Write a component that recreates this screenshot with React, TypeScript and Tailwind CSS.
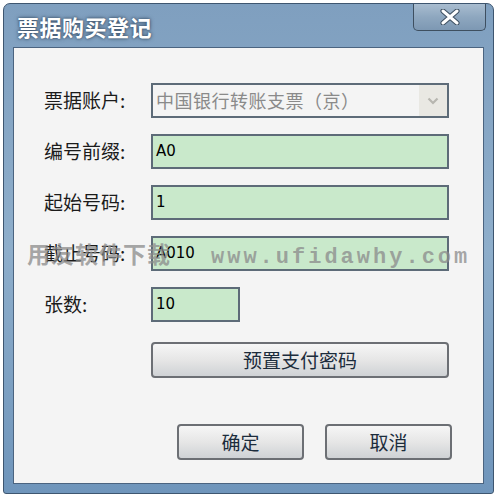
const cjk = { fontFamily: '"Noto Sans CJK SC", "Noto Sans", sans-serif' };
const latin = { fontFamily: '"DejaVu Sans", "Noto Sans CJK SC", sans-serif' };

function Field({ label, value, width = "w-[298px]" }: { label: string; value: string; width?: string }) {
  return (
    <div className="flex items-center h-[35px]">
      <div className="w-[107px] text-[19px] text-[#1b1b1b]" style={cjk}>
        {label}
      </div>
      <div
        className={`${width} h-[35px] border-2 border-[#5d6b78] bg-[#c9e9cb] flex items-center px-[3px] text-[15px] text-black`}
        style={latin}
      >
        {value}
      </div>
    </div>
  );
}

function Btn({ children, className = "" }: { children: React.ReactNode; className?: string }) {
  return (
    <button
      className={`h-[36px] rounded-[4px] border-2 border-[#6c6f74] bg-gradient-to-b from-[#f6f6f6] via-[#e6e6e6] to-[#cfd2d5] text-[19px] text-[#1c2c3c] flex items-center justify-center ${className}`}
      style={cjk}
    >
      {children}
    </button>
  );
}

export default function App() {
  return (
    <div className="w-[497px] h-[500px] bg-white pt-[3px] pl-[3px]">
      <div className="w-[491px] h-[491px] rounded-t-[7px] rounded-b-[3px] border border-[#3e5670] bg-gradient-to-b from-[#7f9fbf] via-[#8eaecb] to-[#6f95bb] flex flex-col">
        <div className="h-[43px] flex items-start justify-between pl-[13px] pr-[7px]">
          <div
            className="mt-[6px] text-[22px] font-bold text-white tracking-[0.5px]"
            style={{ ...cjk, textShadow: "0 0 4px #3a5068, 0 0 2px #3a5068" }}
          >
            票据购买登记
          </div>
          <div className="w-[73px] h-[27px] rounded-b-[5px] border border-t-0 border-[#3e4f60] bg-gradient-to-b from-[#a9bdd0] via-[#8ea7bf] to-[#7d98b3] flex items-center justify-center">
            <svg width="22" height="16" viewBox="0 0 22 16">
              <path d="M4 2 L18 14 M18 2 L4 14" stroke="#3c4e60" strokeWidth="5" strokeLinecap="round" />
              <path d="M4 2 L18 14 M18 2 L4 14" stroke="#ffffff" strokeWidth="3" strokeLinecap="round" />
            </svg>
          </div>
        </div>
        <div className="mx-[9px] h-[437px] border border-[#4b6480] bg-[#f4f4f4] relative flex flex-col pl-[30px] pt-[35px]">
          <div className="flex flex-col gap-[16px]">
            <div className="flex items-center h-[35px]">
              <div className="w-[107px] text-[19px] text-[#1b1b1b]" style={cjk}>
                票据账户:
              </div>
              <div className="w-[298px] h-[35px] border-2 border-[#5d6b78] bg-[#f4f4f4] flex items-center">
                <div className="flex-1 pl-[3px] text-[18px] text-[#8a8a8a] tracking-[0.5px]" style={cjk}>
                  中国银行转账支票（京）
                </div>
                <div className="w-[28px] h-[31px] bg-[#e9e8e3] flex items-center justify-center">
                  <svg width="12" height="8" viewBox="0 0 12 8">
                    <path d="M1.5 1.5 L6 6 L10.5 1.5" stroke="#b7b6b0" strokeWidth="2.2" fill="none" />
                  </svg>
                </div>
              </div>
            </div>
            <Field label="编号前缀:" value="A0" />
            <Field label="起始号码:" value="1" />
            <Field label="截止号码:" value="A010" />
            <Field label="张数:" value="10" width="w-[89px]" />
            <div className="flex h-[36px] mt-[4px]">
              <div className="w-[107px]" />
              <Btn className="w-[298px]">预置支付密码</Btn>
            </div>
          </div>
          <div className="flex gap-[21px] mt-[46px] pl-[133px]">
            <Btn className="w-[127px]">确定</Btn>
            <Btn className="w-[127px]">取消</Btn>
          </div>
          <div className="absolute left-[13px] top-[188px] flex items-baseline gap-[40px] text-[#8b8b8b]/75 pointer-events-none">
            <span className="text-[23px] font-bold tracking-[1px]" style={cjk}>
              用友软件下载
            </span>
            <span className="text-[22px] font-bold tracking-[3px]" style={{ fontFamily: '"Liberation Mono", monospace' }}>
              www.ufidawhy.com
            </span>
          </div>
        </div>
      </div>
    </div>
  );
}
